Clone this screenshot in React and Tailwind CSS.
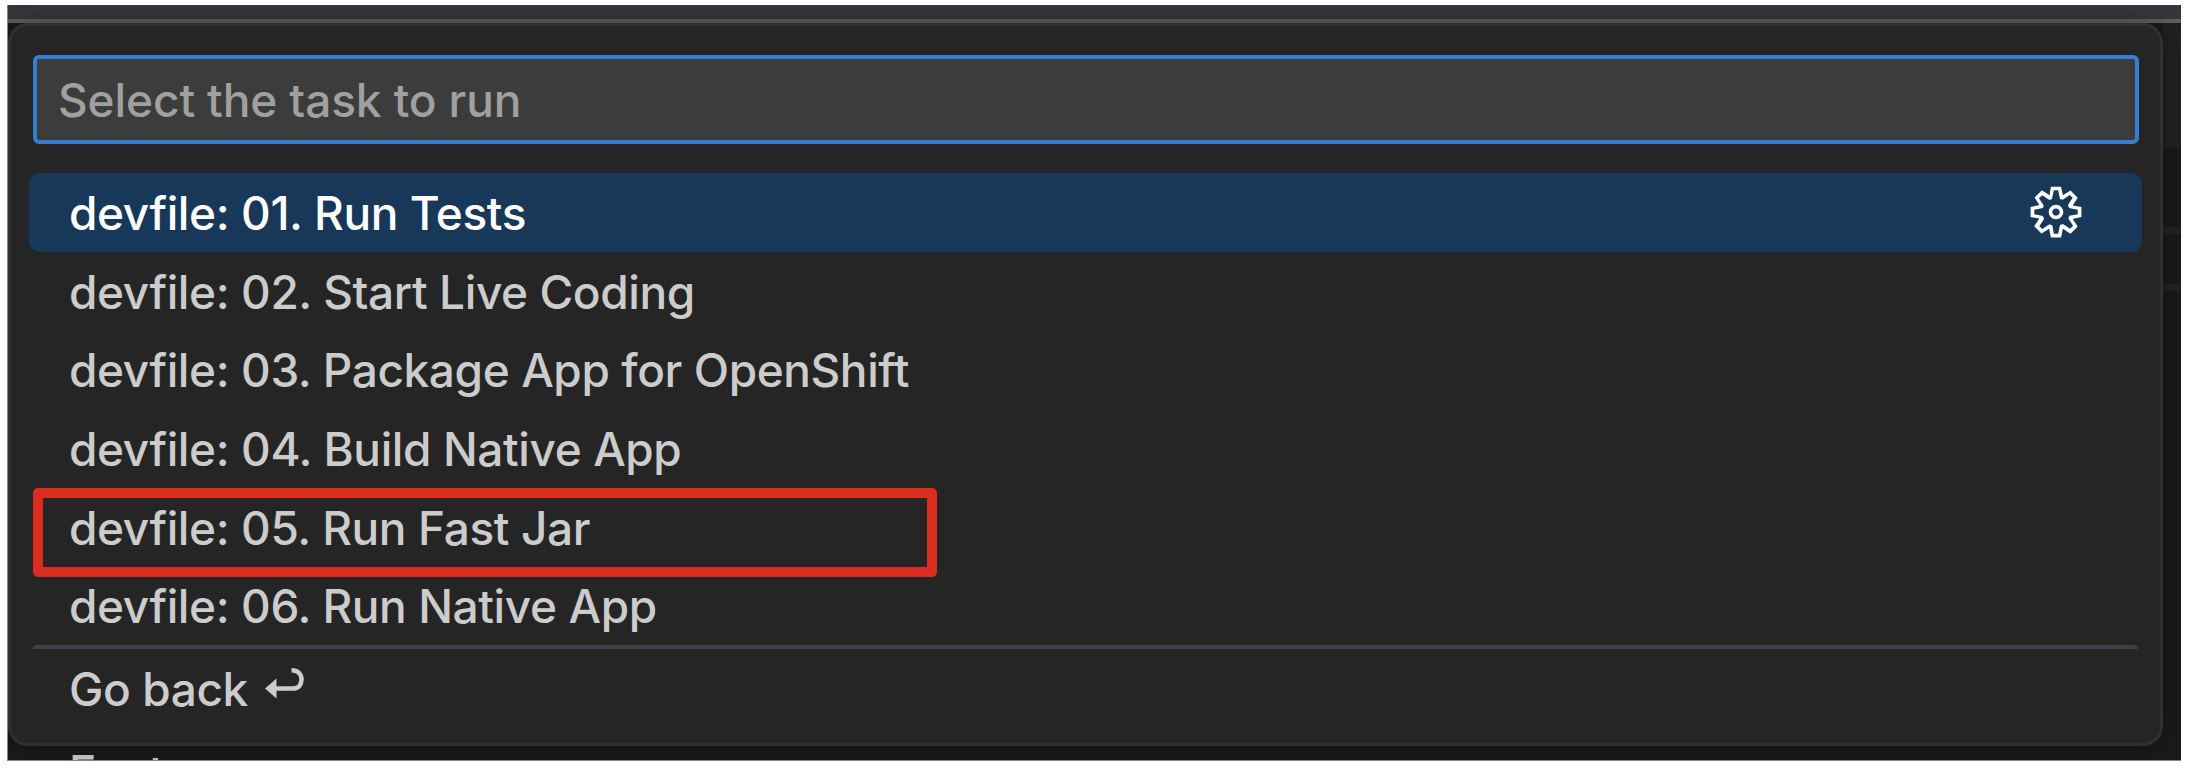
const tasks = [
  'devfile: 01. Run Tests',
  'devfile: 02. Start Live Coding',
  'devfile: 03. Package App for OpenShift',
  'devfile: 04. Build Native App',
  'devfile: 05. Run Fast Jar',
  'devfile: 06. Run Native App',
];

function GearIcon() {
  return (
    <svg className="size-[58px]" viewBox="0 0 16 16" fill="#ffffff" fillRule="evenodd" clipRule="evenodd">
      <path d="M9.1 4.4L8.6 2H7.4l-.5 2.4-.7.3-2-1.3-.9.8 1.3 2-.2.7-2.4.5v1.2l2.4.5.3.8-1.3 2 .8.8 2-1.3.8.3.4 2.3h1.2l.5-2.4.8-.3 2 1.3.8-.8-1.3-2 .3-.8 2.3-.4V7.4l-2.4-.5-.3-.8 1.3-2-.8-.8-2 1.3-.7-.2zM9.4 1l.5 2.4L12 2.1l2 2-1.4 2.1 2.4.4v2.8l-2.4.5L14 12l-2 2-2.1-1.4-.5 2.4H6.6l-.5-2.4L4 13.9l-2-2 1.4-2.1L1 9.4V6.6l2.4-.5L2.1 4l2-2 2.1 1.4.4-2.4h2.8zm.6 7c0 1.1-.9 2-2 2s-2-.9-2-2 .9-2 2-2 2 .9 2 2zM8 9c.6 0 1-.4 1-1s-.4-1-1-1-1 .4-1 1 .4 1 1 1z" />
    </svg>
  );
}

function ReturnIcon() {
  return (
    <svg className="mb-[10px] ml-[17px] h-[32px] w-[40px]" viewBox="0 0 40 32">
      <path d="M0 20.5 L11.5 10.5 V30.5 Z" fill="#cccccc" />
      <path d="M10 20.5 H28 C33.5 20.5 36.5 16.5 36.5 11.5 C36.5 6 33 2.3 26.5 2.3" fill="none" stroke="#cccccc" strokeWidth="4.6" />
    </svg>
  );
}

function TaskRow({ label, active }) {
  return (
    <li
      className={
        active
          ? 'flex h-[78.7px] items-center justify-between rounded-[11px] bg-[#18385a] pr-[57px] pl-[40px] text-white'
          : 'flex h-[78.7px] items-center pl-[40px]'
      }
    >
      <span className="pt-px whitespace-nowrap">{label}</span>
      {active && <GearIcon />}
    </li>
  );
}

export default function App() {
  return (
    <div className="h-[770px] w-[2186px] overflow-hidden bg-white pt-[5px] pl-[7px] font-[Inter,sans-serif] font-medium tracking-[-0.4px]">
      <div className="flex h-[756px] w-[2174px] flex-col overflow-hidden border-b border-l border-[#858585] bg-[#1a1a1a]">
        <div className="h-[18px] shrink-0 border-b-4 border-[#5f5f64] bg-[#36373c]" />
        <div className="flex h-[723px] shrink-0">
          <div className="relative flex h-[723px] w-[2155px] shrink-0 flex-col rounded-[20px] border-[3px] border-[#303030] bg-[#252525] pt-[29px] pr-[18px] pl-[18px] text-[46px] leading-none text-[#cccccc] shadow-[0_0_24px_rgba(0,0,0,0.35)]">
            <div className="mr-[3px] ml-1 flex h-[89px] shrink-0 items-center rounded-[6px] border-4 border-[#357fd2] bg-[#3c3c3c] pl-[21px] tracking-[-0.1px] text-[#a0a0a0]">
              <span className="pt-px whitespace-nowrap">Select the task to run</span>
            </div>
            <ul className="mt-[29px]">
              {tasks.map((t, i) => (
                <TaskRow key={t} label={t} active={i === 0} />
              ))}
            </ul>
            <div className="mx-1 h-1 shrink-0 rounded-t-[4px] bg-[#3f3f46]" />
            <div className="flex h-[80px] items-center pl-[40px]">
              <span className="whitespace-nowrap">Go back</span>
              <ReturnIcon />
            </div>
            <div className="absolute top-[462px] left-[22px] h-[89px] w-[904px] rounded-[5px] border-[10px] border-[#da2d20]" />
          </div>
          <div className="flex grow flex-col">
            <div className="h-[125px] bg-[#212121]" />
            <div className="h-[79px]" />
            <div className="h-[7px] bg-[#222222]" />
            <div className="h-[50px]" />
            <div className="h-[7px] bg-[#222222]" />
          </div>
        </div>
        <div className="h-[14px] shrink-0 overflow-hidden pt-[3px] pl-[61px] text-[46px] leading-[47px] text-[#cccccc]">
          Font
        </div>
      </div>
    </div>
  );
}
